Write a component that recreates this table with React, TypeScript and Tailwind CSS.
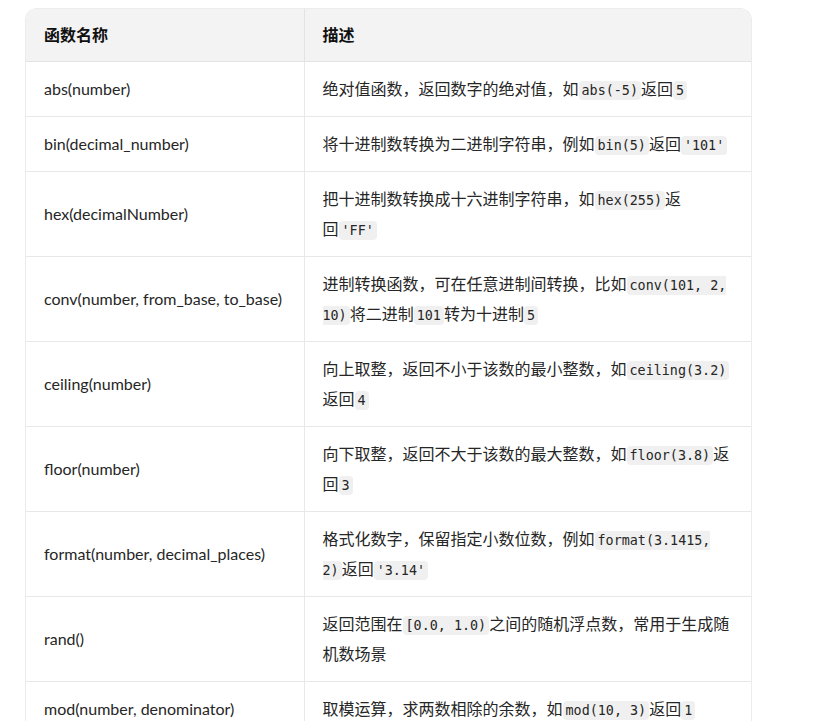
import React from "react";

type Part = string | { c: string };

const rows: { name: string; desc: Part[] }[] = [
  { name: "abs(number)", desc: ["绝对值函数，返回数字的绝对值，如", { c: "abs(-5)" }, "返回", { c: "5" }] },
  { name: "bin(decimal_number)", desc: ["将十进制数转换为二进制字符串，例如", { c: "bin(5)" }, "返回", { c: "'101'" }] },
  { name: "hex(decimalNumber)", desc: ["把十进制数转换成十六进制字符串，如", { c: "hex(255)" }, "返回", { c: "'FF'" }] },
  { name: "conv(number, from_base, to_base)", desc: ["进制转换函数，可在任意进制间转换，比如", { c: "conv(101, 2, 10)" }, "将二进制", { c: "101" }, "转为十进制", { c: "5" }] },
  { name: "ceiling(number)", desc: ["向上取整，返回不小于该数的最小整数，如", { c: "ceiling(3.2)" }, "返回", { c: "4" }] },
  { name: "floor(number)", desc: ["向下取整，返回不大于该数的最大整数，如", { c: "floor(3.8)" }, "返回", { c: "3" }] },
  { name: "format(number, decimal_places)", desc: ["格式化数字，保留指定小数位数，例如", { c: "format(3.1415, 2)" }, "返回", { c: "'3.14'" }] },
  { name: "rand()", desc: ["返回范围在", { c: "[0.0, 1.0)" }, "之间的随机浮点数，常用于生成随机数场景"] },
  { name: "mod(number, denominator)", desc: ["取模运算，求两数相除的余数，如", { c: "mod(10, 3)" }, "返回", { c: "1" }] },
];

const font = "font-['Lato','Noto_Sans_CJK_SC',sans-serif]";

export default function App() {
  return (
    <div className={`h-[721px] overflow-hidden bg-white pt-2 pl-[25px] ${font}`}>
      <div className="w-[727px] rounded-t-[12px] border border-[#ececec] border-b-0 overflow-hidden">
        <table className="w-full table-fixed border-collapse text-[16px] leading-[30px] text-[#262626]">
          <colgroup>
            <col className="w-[278px]" />
            <col />
          </colgroup>
          <thead>
            <tr className="bg-[#f3f3f3]">
              <th className="h-[52px] text-left font-bold text-[#111] px-[18px] py-[11px] border-b border-r border-[#e3e3e3]">函数名称</th>
              <th className="h-[52px] text-left font-bold text-[#111] px-[18px] py-[11px] border-b border-[#e3e3e3]">描述</th>
            </tr>
          </thead>
          <tbody>
            {rows.map((r) => (
              <tr key={r.name}>
                <td className="align-middle px-[18px] py-[12px] border-b border-r border-[#e8e8e8]">{r.name}</td>
                <td className="align-middle px-[18px] py-[12px] border-b border-[#e8e8e8]">
                  {r.desc.map((p, i) =>
                    typeof p === "string" ? (
                      <span key={i}>{p}</span>
                    ) : (
                      <code
                        key={i}
                        className="font-['DejaVu_Sans_Mono',monospace] text-[13.4px] leading-none bg-[#f0f0f0] rounded-[4px] px-[3px] py-[2px] text-[#262626]"
                      >
                        {p.c}
                      </code>
                    )
                  )}
                </td>
              </tr>
            ))}
          </tbody>
        </table>
      </div>
    </div>
  );
}
